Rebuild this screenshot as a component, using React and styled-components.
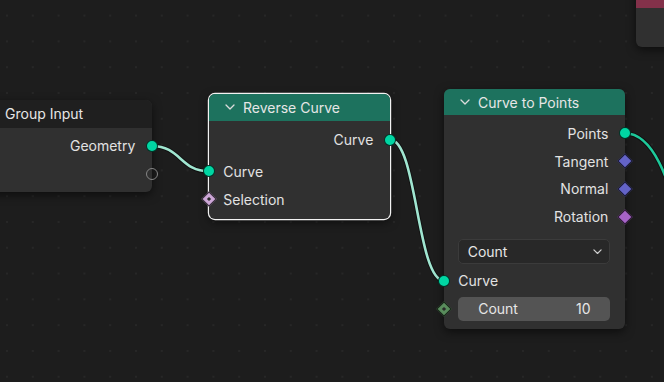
import React from "react";
import styled, { createGlobalStyle } from "styled-components";

const Global = createGlobalStyle`
  html, body { margin: 0; padding: 0; background: #1d1d1d; }
  body { font-family: Inter, "Noto Sans", "DejaVu Sans", sans-serif; }
`;

const Canvas = styled.div`
  position: relative;
  width: 664px;
  height: 382px;
  overflow: hidden;
  background-color: #1d1d1d;
  background-image: radial-gradient(circle, #272727 0.9px, transparent 1.5px);
  background-size: 25.8px 25.8px;
  background-position: -5.9px 2.7px;
`;

const Links = styled.svg`
  position: absolute;
  left: 0;
  top: 0;
  z-index: 0;
  overflow: visible;
`;

const Node = styled.div`
  position: absolute;
  z-index: 1;
  left: ${(p) => p.$x}px;
  top: ${(p) => p.$y}px;
  width: ${(p) => p.$w}px;
  background: #303030;
  border-radius: 6px;
  box-shadow: ${(p) =>
    p.$selected
      ? "0 0 0 1.2px #f2f2f2, 0 3px 10px rgba(0,0,0,0.55)"
      : "0 3px 10px rgba(0,0,0,0.55)"};
  color: #e2e2e2;
  font-size: 14px;
`;

const Header = styled.div`
  height: ${(p) => p.$h}px;
  background: ${(p) => p.$bg};
  border-radius: 6px 6px 0 0;
  display: flex;
  align-items: center;
  gap: 8px;
  padding-left: 16px;
  box-sizing: border-box;
  font-size: 14px;
  color: #e6e6e6;
  white-space: nowrap;
`;

const Body = styled.div`
  display: flex;
  flex-direction: column;
  padding-top: ${(p) => p.$pt}px;
  padding-bottom: ${(p) => p.$pb}px;
`;

const Row = styled.div`
  position: relative;
  height: ${(p) => p.$h || 27.8}px;
  margin-top: ${(p) => p.$mt || 0}px;
  display: flex;
  align-items: center;
  justify-content: ${(p) => (p.$out ? "flex-end" : "flex-start")};
  padding: 0 16.7px 0 14.3px;
  box-sizing: border-box;
  white-space: nowrap;
`;

const SocketBase = styled.span`
  position: absolute;
  top: 50%;
  ${(p) => (p.$out ? "right" : "left")}: 0;
  transform: translate(${(p) => (p.$out ? "50%" : "-50%")}, -50%);
  display: flex;
  align-items: center;
  justify-content: center;
`;

const Circle = styled.span`
  flex: none;
  width: 10px;
  height: 10px;
  border-radius: 50%;
  background: ${(p) => p.$c};
  border: 1px solid rgba(0, 0, 0, 0.75);
`;

const Hollow = styled.span`
  flex: none;
  width: 12px;
  height: 12px;
  border-radius: 50%;
  box-sizing: border-box;
  border: 1.5px solid #858585;
  background: transparent;
`;

const Diamond = styled.span`
  flex: none;
  width: 9px;
  height: 9px;
  transform: rotate(45deg);
  background: ${(p) => p.$c};
  border: 1px solid rgba(0, 0, 0, 0.75);
  display: flex;
  align-items: center;
  justify-content: center;
  &::after {
    content: "";
    display: ${(p) => (p.$dot ? "block" : "none")};
    width: 3px;
    height: 3px;
    background: #2a2a2a;
  }
`;

const Dropdown = styled.div`
  margin: 8.7px 15px 0 13.7px;
  height: 25px;
  box-sizing: border-box;
  background: #282828;
  border: 1px solid #3b3b3b;
  border-radius: 5px;
  display: flex;
  align-items: center;
  justify-content: space-between;
  padding: 0 7px 0 9px;
  color: #e6e6e6;
`;

const Field = styled.div`
  flex: 1;
  height: 100%;
  margin-right: -1.7px;
  margin-left: -0.6px;
  background: #545454;
  border-radius: 5px;
  display: flex;
  align-items: center;
  justify-content: space-between;
  padding: 0 19.5px 0 20.5px;
  color: #e6e6e6;
`;

const Chevron = ({ size = 10, color = "#dcdcdc" }) => (
  <svg width={size} height={size * 0.6} viewBox="0 0 10 6" fill="none">
    <path d="M1 1 L5 5 L9 1" stroke={color} strokeWidth="1.3" strokeLinecap="round" strokeLinejoin="round" />
  </svg>
);

const Socket = ({ out, kind, color, dot }) => (
  <SocketBase $out={out}>
    {kind === "circle" && <Circle $c={color} />}
    {kind === "hollow" && <Hollow />}
    {kind === "diamond" && <Diamond $c={color} $dot={dot} />}
  </SocketBase>
);

const GEO = "#00d6a3";
const VEC = "#6363c7";
const ROT = "#a663c7";
const BOOL = "#cca6d6";
const INT = "#598c5c";

const link = (x1, y1, x2, y2) => {
  const d = Math.abs(x2 - x1) * 0.5;
  return `M${x1} ${y1} C${x1 + d} ${y1}, ${x2 - d} ${y2}, ${x2} ${y2}`;
};

const Link = ({ d, color }) => (
  <g>
    <path d={d} stroke="rgba(0,0,0,0.45)" strokeWidth="4.5" fill="none" />
    <path d={d} stroke={color} strokeWidth="2.6" fill="none" />
  </g>
);

export default function App() {
  return (
    <>
      <Global />
      <Canvas>
        <Links width="664" height="382">
          <Link d={link(152, 146, 209, 171.4)} color="#a0e6d1" />
          <Link d={link(390, 139.6, 444, 280.7)} color="#a0e6d1" />
          <Link d={link(625, 133.3, 740, 320)} color="#1ec99b" />
        </Links>

        <Node $x={636} $y={-20} $w={120}>
          <Header $h={28.3} $bg="#83314a" />
          <Body $pt={38.4} $pb={0} />
        </Node>

        <Node $x={-29} $y={100} $w={181}>
          <Header $h={27.7} $bg="#1f1f1f">
            <span style={{ width: 10 }} />
            Group Input
          </Header>
          <Body $pt={4.4} $pb={4}>
            <Row $out $h={27.8}>
              Geometry
              <Socket out kind="circle" color={GEO} />
            </Row>
            <Row $out $h={27.8}>
              <Socket out kind="hollow" />
            </Row>
          </Body>
        </Node>

        <Node $x={209} $y={94} $w={181} $selected>
          <Header $h={26.7} $bg="#1d725e">
            <Chevron />
            Reverse Curve
          </Header>
          <Body $pt={5} $pb={5.6}>
            <Row $out>
              Curve
              <Socket out kind="circle" color={GEO} />
            </Row>
            <Row $mt={4}>
              <Socket kind="circle" color={GEO} />
              Curve
            </Row>
            <Row>
              <Socket kind="diamond" color={BOOL} dot />
              Selection
            </Row>
          </Body>
        </Node>

        <Node $x={444} $y={89} $w={181}>
          <Header $h={26} $bg="#1d725e">
            <Chevron />
            Curve to Points
          </Header>
          <Body $pt={4.4} $pb={8.3}>
            <Row $out>
              Points
              <Socket out kind="circle" color={GEO} />
            </Row>
            <Row $out>
              Tangent
              <Socket out kind="diamond" color={VEC} />
            </Row>
            <Row $out>
              Normal
              <Socket out kind="diamond" color={VEC} />
            </Row>
            <Row $out>
              Rotation
              <Socket out kind="diamond" color={ROT} />
            </Row>
            <Dropdown>
              <span>Count</span>
              <Chevron size={9} color="#d0d0d0" />
            </Dropdown>
            <Row $mt={2.5}>
              <Socket kind="circle" color={GEO} />
              Curve
            </Row>
            <Row $mt={2.1} $h={24.3}>
              <Socket kind="diamond" color={INT} dot />
              <Field>
                <span>Count</span>
                <span>10</span>
              </Field>
            </Row>
          </Body>
        </Node>
      </Canvas>
    </>
  );
}
